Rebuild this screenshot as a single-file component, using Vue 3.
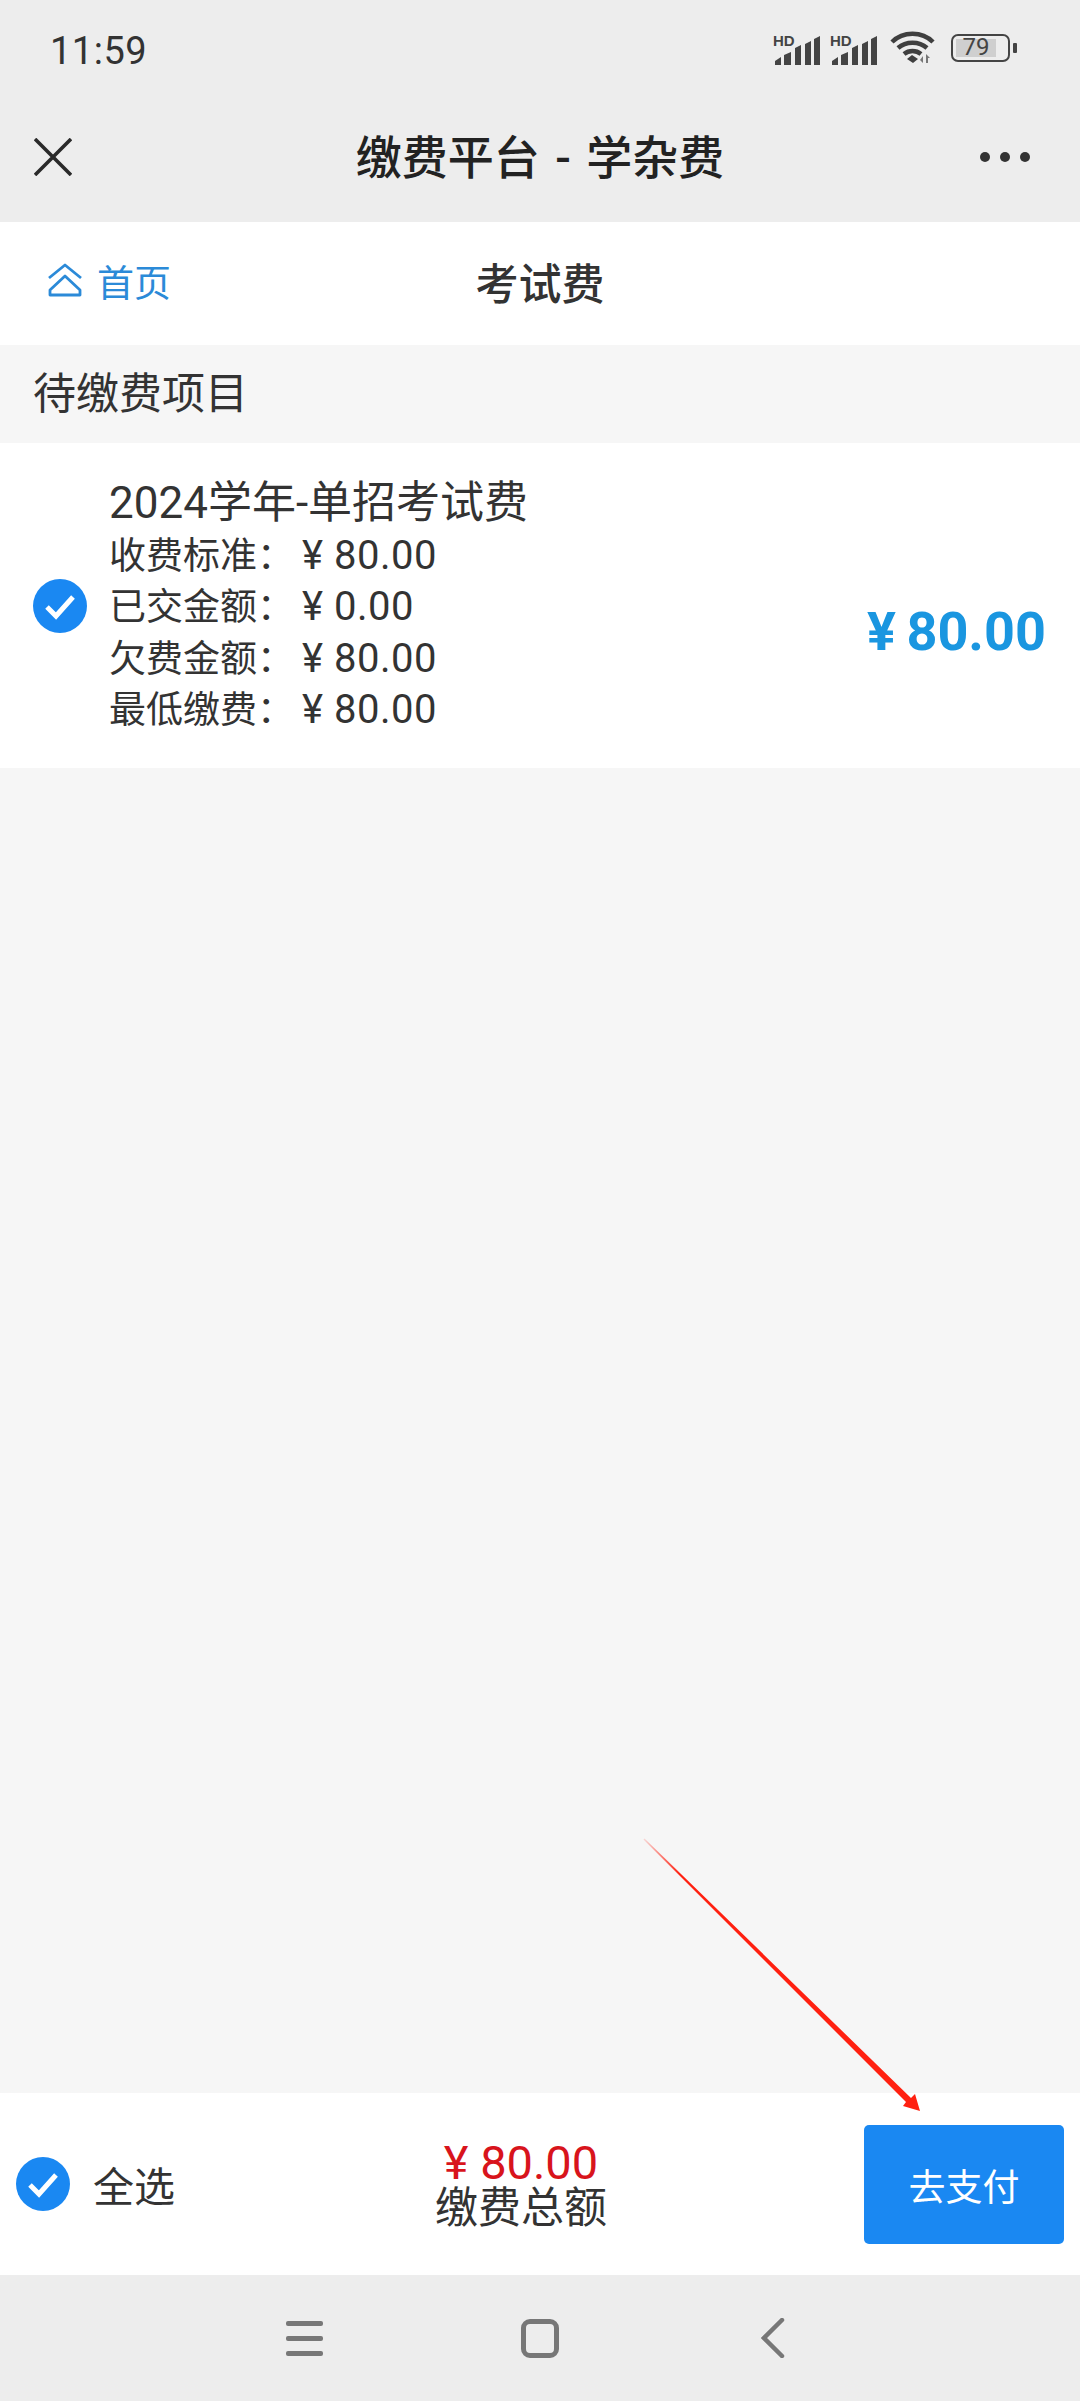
<template>
  <div class="page">
    <!-- Barre d'état -->
    <div class="status">
      <span class="time">11:59</span>
      <div class="status-icons">
        <svg v-for="n in 2" :key="n" class="signal" width="47" height="35" viewBox="0 -3 47 35">
          <text x="0" y="12" class="hd">HD</text>
          <path d="M2 31v-4l6-4v8zM11 31V21l7-3v13zM22 31V14l6-3v20zM32 31V10l6-3v24zM41 31V5l6-3v29z" fill="#444" />
        </svg>
        <svg class="wifi" width="46" height="34" viewBox="0 0 46 34">
          <path d="M2 11C13 0 32 0 43 11M8 17c8-7 21-7 29 0M14 23c5-4 12-4 17 0" fill="none" stroke="#3f3f3f" stroke-width="4.5" />
          <path d="M17 28l5-4 6 4-5 4z" fill="#3f3f3f" />
          <path d="M33 25v7l-3-3zM36 23l4 4h-2v5h-2z" fill="#777" />
        </svg>
        <div class="battery">
          <div class="battery-body"><span class="battery-fill">79</span></div>
          <div class="battery-nub" />
        </div>
      </div>
    </div>

    <!-- Barre de navigation -->
    <div class="nav">
      <svg class="close" width="38" height="38" viewBox="0 0 38 38">
        <path d="M1 1l36 36M37 1L1 37" stroke="#2a2a2a" stroke-width="3.6" fill="none" />
      </svg>
      <span class="nav-title">缴费平台 - 学杂费</span>
      <div class="dots"><i /><i /><i /></div>
    </div>

    <div class="head">
      <a class="home">
        <svg class="home-icon" width="36" height="34" viewBox="0 0 36 34">
          <path d="M2 15L18 2l16 13M3 32v-5l15-14 15 14v5z" fill="none" stroke="#2b8ad8" stroke-width="2.8" stroke-linejoin="round" />
        </svg>
        <span>首页</span>
      </a>
      <span class="head-title">考试费</span>
    </div>

    <main class="main">
      <div class="section">待缴费项目</div>
      <div class="item">
        <span class="check">
          <svg width="54" height="54" viewBox="0 0 54 54">
            <circle cx="27" cy="27" r="27" fill="#1a88f2" />
            <path d="M14 28l9 9 17-19" fill="none" stroke="#fff" stroke-width="5" />
          </svg>
        </span>
        <div class="item-info">
          <div class="item-title">2024学年-单招考试费</div>
          <div v-for="row in rows" :key="row.label" class="item-row">
            <span class="row-label">{{ row.label }}：</span><span class="row-value">¥ {{ row.value }}</span>
          </div>
        </div>
        <div class="item-amount">¥ 80.00</div>
      </div>
    </main>

    <div class="footer">
      <div class="select-all">
        <svg width="54" height="54" viewBox="0 0 54 54">
          <circle cx="27" cy="27" r="27" fill="#1a88f2" />
          <path d="M14 28l9 9 17-19" fill="none" stroke="#fff" stroke-width="5" />
        </svg>
        <span>全选</span>
      </div>
      <div class="total">
        <div class="total-value">¥ 80.00</div>
        <div class="total-label">缴费总额</div>
      </div>
      <button class="pay">去支付</button>
    </div>

    <div class="sysnav">
      <div class="sys-menu"><i /><i /><i /></div>
      <div class="sys-home" />
      <svg class="sys-back" width="24" height="40" viewBox="0 0 24 40">
        <path d="M21 2L3 20l18 18" fill="none" stroke="#777" stroke-width="4.5" stroke-linecap="round" />
      </svg>
    </div>

    <!-- Flèche rouge -->
    <svg class="arrow" width="285" height="280" viewBox="640 1835 285 280">
      <defs>
        <linearGradient id="arrowFade" gradientUnits="userSpaceOnUse" x1="644" y1="1839" x2="680" y2="1874">
          <stop offset="0" stop-color="#ff2010" stop-opacity="0.15" />
          <stop offset="1" stop-color="#ff2010" />
        </linearGradient>
      </defs>
      <polygon points="644.5,1838.5 911,2098 915,2094 920,2111 903,2106 906,2102 643.5,1839.5" fill="url(#arrowFade)" />
    </svg>
  </div>
</template>

<script setup>
const rows = [
  { label: '收费标准', value: '80.00' },
  { label: '已交金额', value: '0.00' },
  { label: '欠费金额', value: '80.00' },
  { label: '最低缴费', value: '80.00' }
]
</script>

<style scoped>
.page {
  position: relative;
  display: flex;
  flex-direction: column;
  height: 2401px;
  overflow: hidden;
  background: #f6f6f6;
  color: #333;
  font-family: Roboto, "Noto Sans CJK SC", sans-serif;
}

/* Barre d'état */
.status {
  height: 92px;
  box-sizing: border-box;
  padding: 4px 63px 0 50px;
  display: flex;
  align-items: center;
  justify-content: space-between;
  background: #ededed;
}
.time { font-size: 38px; color: #333; letter-spacing: 0.5px; margin-top: 6px; }
.status-icons { display: flex; align-items: center; gap: 10px; }
.hd { font: 700 15px "Liberation Sans", sans-serif; fill: #444; }
.wifi { margin-left: 3px; margin-right: 5px; }
.battery { display: flex; align-items: center; gap: 3px; }
.battery-body {
  width: 59px;
  height: 28px;
  box-sizing: border-box;
  border: 2.5px solid #444;
  border-radius: 7px;
  padding: 3px 12px 3px 3px;
  display: flex;
}
.battery-fill {
  flex: 1;
  background: #cfcfcf;
  font-size: 24px;
  line-height: 17px;
  text-align: center;
  color: #444;
}
.battery-nub { width: 4px; height: 10px; background: #444; border-radius: 1px; }

/* Barre de navigation */
.nav {
  height: 130px;
  box-sizing: border-box;
  padding-bottom: 6px;
  display: flex;
  align-items: center;
  justify-content: center;
  position: relative;
  background: #ededed;
}
.nav-title { font-size: 46px; font-weight: 500; color: #222; word-spacing: 4px; }
.close { position: absolute; left: 34px; top: 46px; }
.dots { position: absolute; right: 50px; top: 60px; display: flex; gap: 10px; }
.dots i { width: 10px; height: 10px; border-radius: 50%; background: #333; }

/* En-tête */
.head {
  height: 123px;
  box-sizing: border-box;
  padding-bottom: 6px;
  position: relative;
  display: flex;
  align-items: center;
  justify-content: center;
  background: #fff;
}
.head-title { font-size: 43px; font-weight: 500; color: #333; }
.home {
  position: absolute;
  left: 47px;
  top: 32px;
  display: flex;
  align-items: center;
  gap: 14px;
  color: #2b8ad8;
  font-size: 37px;
}
.home-icon { margin-top: -3px; }

.main { flex: 1; }
.section {
  height: 98px;
  box-sizing: border-box;
  padding: 0 0 8px 33px;
  display: flex;
  align-items: center;
  font-size: 43px;
  color: #333;
}
.item {
  height: 325px;
  box-sizing: border-box;
  padding: 33px 34px 33px 33px;
  display: flex;
  align-items: center;
  background: #fff;
}
.check { display: flex; margin-right: 22px; }
.item-info { flex: 1; }
.item-title { font-size: 44px; line-height: 52px; color: #333; }
.item-row { height: 51.5px; line-height: 54px; font-size: 37px; color: #333; white-space: nowrap; }
.row-value { font-size: 40px; letter-spacing: 0.5px; margin-left: 8px; }
.item-amount { font-size: 54px; font-weight: 700; color: #1a96e0; padding-top: 52px; word-spacing: -3px; }

/* Pied de page */
.footer {
  height: 182px;
  position: relative;
  display: flex;
  align-items: center;
  background: #fff;
}
.select-all {
  display: flex;
  align-items: center;
  gap: 23px;
  margin-left: 16px;
  font-size: 41px;
  color: #333;
}
.total {
  position: absolute;
  left: 421px;
  width: 200px;
  top: 46px;
  text-align: center;
}
.total-value { font-size: 47px; line-height: 48px; color: #d8141c; }
.total-label { font-size: 43px; line-height: 42px; color: #333; white-space: nowrap; }
.pay {
  position: absolute;
  left: 864px;
  top: 32px;
  width: 200px;
  height: 119px;
  border: none;
  border-radius: 5px;
  background: #1a88f2;
  color: #fff;
  font: inherit;
  font-size: 37px;
}

/* Navigation système */
.sysnav {
  height: 126px;
  box-sizing: border-box;
  padding-left: 286px;
  display: flex;
  align-items: center;
  background: #ededed;
}
.sys-menu { display: flex; flex-direction: column; gap: 10px; width: 37px; margin-right: 198px; }
.sys-menu i { height: 5px; border-radius: 2px; background: #777; }
.sys-home {
  width: 38px;
  height: 39px;
  box-sizing: border-box;
  border: 5px solid #777;
  border-radius: 9px;
  margin-right: 202px;
}

.arrow { position: absolute; left: 640px; top: 1835px; pointer-events: none; }
</style>
<style>
body { background: #f6f6f6; }
</style>
